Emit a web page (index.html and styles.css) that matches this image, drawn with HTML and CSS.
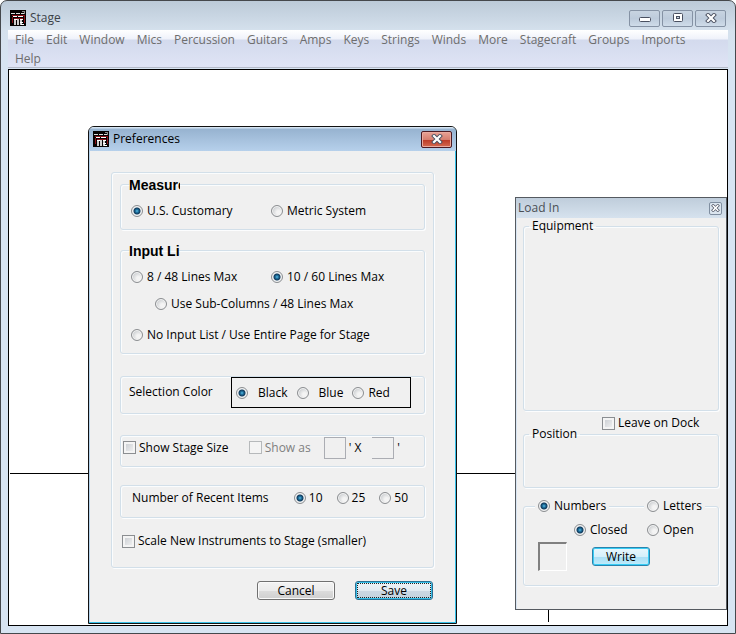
FILE: index.html
```html
<!DOCTYPE html>
<html lang="en">
<head>
<meta charset="utf-8">
<title>Stage</title>
<link rel="stylesheet" href="styles.css">
</head>
<body>
<svg class="defs" aria-hidden="true">
  <symbol id="app" viewBox="0 0 16 16">
    <rect width="16" height="16" fill="#060303"/>
    <path d="M2 5.500h12M2.500 7v6M14.500 5v8M4 8.500h9" stroke="#8c1018" fill="none"/>
    <path d="M1 3.500h4M6 3.500h4M11 3.500h3" stroke="#ddd" fill="none"/>
    <path d="M3 6.500h4M8 6.500h5" stroke="#fff" fill="none"/>
    <path d="M4 9.500h3M10 9.500h3" stroke="#fff" fill="none"/>
    <path d="M5 9v6M8 9v6M11 9v6" stroke="#fff" stroke-width="1.600" fill="none"/>
    <path d="M10 12.500h3M11 14.500h3" stroke="#fff" fill="none"/>
    <path d="M12 1.500h3M14.500 1v3" stroke="#8a8a8a" fill="none"/>
  </symbol>
  <symbol id="cross" viewBox="0 0 12 10">
    <path d="M3 2l6 6M9 2l-6 6" stroke="#4a5060" stroke-width="4" stroke-linecap="square"/>
    <path d="M3 2l6 6M9 2l-6 6" stroke="#fff" stroke-width="2.200" stroke-linecap="square"/>
  </symbol>
</svg>
<div class="window">
  <header class="titlebar">
    <svg class="app-icon" aria-hidden="true"><use href="#app"/></svg>
    <span class="title">Stage</span>
    <div class="controls">
      <button class="control" aria-label="Minimize"><svg class="low" width="12" height="6" viewBox="0 0 12 6"><rect x=".5" y=".5" width="11" height="4" rx="1" fill="#fff" stroke="#4a5060"/></svg></button>
      <button class="control" aria-label="Maximize"><svg width="12" height="10" viewBox="0 0 12 10"><rect x="1.500" y=".5" width="9" height="8" rx="1" fill="#fff" stroke="#4a5060"/><rect x="4.500" y="3.500" width="3" height="2" fill="#c8d4e2" stroke="#4a5060"/></svg></button>
      <button class="control" aria-label="Close"><svg width="12" height="10"><use href="#cross"/></svg></button>
    </div>
  </header>
  <nav class="menu">
    <a href="#">File</a><a href="#">Edit</a><a href="#">Window</a><a href="#">Mics</a><a href="#">Percussion</a><a href="#">Guitars</a><a href="#">Amps</a><a href="#">Keys</a><a href="#">Strings</a><a href="#">Winds</a><a href="#">More</a><a href="#">Stagecraft</a><a href="#">Groups</a><a href="#">Imports</a><a href="#">Help</a>
  </nav>
  <main class="canvas">
    <div class="stage-row"></div>
    <div class="stage-column"></div>

    <form class="dialog">
      <header class="dialog-title">
        <svg class="app-icon" aria-hidden="true"><use href="#app"/></svg>
        <span>Preferences</span>
        <button type="button" class="close-red" aria-label="Close"><svg width="12" height="10"><use href="#cross"/></svg></button>
      </header>
      <div class="dialog-body">
        <div class="group outer">
          <fieldset class="group titled">
            <legend>Measure</legend>
            <div class="pair">
              <label class="option"><input type="radio" name="units" checked>U.S. Customary</label>
              <label class="option"><input type="radio" name="units">Metric System</label>
            </div>
          </fieldset>
          <fieldset class="group titled lists">
            <legend>Input List</legend>
            <div class="pair">
              <label class="option"><input type="radio" name="lines">8 / 48 Lines Max</label>
              <label class="option"><input type="radio" name="lines" checked>10 / 60 Lines Max</label>
            </div>
            <label class="option sub"><input type="radio" name="sub">Use Sub-Columns / 48 Lines Max</label>
            <label class="option none"><input type="radio" name="lines">No Input List / Use Entire Page for Stage</label>
          </fieldset>
          <div class="group selection">
            <span>Selection Color</span>
            <div class="colors">
              <label class="option wide"><input type="radio" name="color" checked>Black</label>
              <label class="option wide"><input type="radio" name="color">Blue</label>
              <label class="option"><input type="radio" name="color">Red</label>
            </div>
          </div>
          <div class="group size">
            <label class="option check"><input type="checkbox">Show Stage Size</label>
            <label class="option check muted"><input type="checkbox" disabled>Show as</label>
            <div class="dimensions">
              <input type="text" class="dimension" aria-label="Stage width" disabled><span>' X</span>
              <input type="text" class="dimension open" aria-label="Stage depth" disabled><span>'</span>
            </div>
          </div>
          <div class="group recent">
            <span>Number of Recent Items</span>
            <label class="option"><input type="radio" name="recent" checked>10</label>
            <label class="option"><input type="radio" name="recent">25</label>
            <label class="option"><input type="radio" name="recent">50</label>
          </div>
          <label class="option check scale"><input type="checkbox">Scale New Instruments to Stage (smaller)</label>
        </div>
        <div class="actions">
          <button type="button" class="button">Cancel</button>
          <button type="button" class="button default"><span>Save</span></button>
        </div>
      </div>
    </form>

    <form class="panel">
      <header class="panel-title">
        <span>Load In</span>
        <button type="button" class="close-small" aria-label="Close"><svg width="9" height="8"><use href="#cross"/></svg></button>
      </header>
      <div class="panel-body">
        <fieldset class="group area equipment"><legend>Equipment</legend></fieldset>
        <label class="option check dock"><input type="checkbox">Leave on Dock</label>
        <fieldset class="group area position"><legend>Position</legend></fieldset>
        <div class="group writer">
          <div class="writer-row first">
            <label class="option on-line"><input type="radio" name="kind" checked>Numbers</label>
            <label class="option on-line"><input type="radio" name="kind">Letters</label>
          </div>
          <div class="writer-row second">
            <label class="option"><input type="radio" name="shape" checked>Closed</label>
            <label class="option"><input type="radio" name="shape">Open</label>
          </div>
          <div class="write">
            <input type="text" class="mark" aria-label="Mark">
            <button type="button" class="button glow">Write</button>
          </div>
        </div>
      </div>
    </form>
  </main>
</div>
</body>
</html>
```
FILE: styles.css
```css
* { box-sizing: border-box; }

body {
  margin: 0;
  background: #fff;
  color: #000;
  font: 12px/16px "Open Sans", "Noto Sans", sans-serif;
}

button, input { margin: 0; padding: 0; font: inherit; color: inherit; }
.defs { position: absolute; width: 0; height: 0; }
.app-icon { width: 16px; height: 16px; flex: none; }

/* Main window */
.window {
  display: flex;
  flex-direction: column;
  min-height: 100vh;
  padding: 0 7px 7px;
  border: 1px solid #45484c;
  border-radius: 7px 7px 0 0;
  background: linear-gradient(#bccad8, #d5e1ed 30px, #d7e4f2 60px);
}

.titlebar {
  display: flex;
  align-items: center;
  height: 29px;
  padding: 5px 2px 0;
  color: #3c4248;
}
.title { margin-left: 4px; }
.controls { display: flex; gap: 2px; margin-left: auto; }
.control {
  display: grid;
  place-items: center;
  width: 31px;
  height: 17px;
  border: 1px solid #8592a4;
  border-radius: 2px;
  background: linear-gradient(#c8d4e1, #bdcbdb 50%, #cfdce9);
}
.low { margin-top: 4px; }

.menu {
  display: flex;
  flex-wrap: wrap;
  align-content: flex-start;
  column-gap: 12px;
  height: 38px;
  padding: 0 7px;
  border-bottom: 1px solid #b4bac8;
  background: linear-gradient(#fff, #eff2fa 9px, #d3daed 10px, #dfe4f5);
}
.menu a {
  color: #6d6d6d;
  line-height: 19px;
  text-decoration: none;
}

.canvas {
  position: relative;
  flex: 1;
  min-height: 557px;
  margin-top: 1px;
  border: 1px solid #000;
  background: #fff;
}
.stage-row {
  position: absolute;
  top: 403px;
  left: 1px;
  right: 200px;
  height: 1px;
  background: #000;
}
.stage-column {
  position: absolute;
  right: 178px;
  top: 403px;
  bottom: 3px;
  width: 1px;
  background: #000;
}

/* Shared form parts */
.group {
  margin: 0;
  border: 1px solid #d2dfe9;
  border-radius: 3px;
  box-shadow: inset 1px 1px #fafcfd, 1px 1px #fcfdfe;
}
.option {
  display: flex;
  align-items: center;
  gap: 4px;
  height: 16px;
  white-space: nowrap;
}
input[type="radio"] {
  appearance: none;
  flex: none;
  width: 12px;
  height: 12px;
  border: 1px solid #8b8e91;
  border-radius: 50%;
  background: radial-gradient(circle at 65% 65%, #f4f4f4 20%, #c9cccf 75%);
  box-shadow: inset 0 0 0 1px #f5f5f5;
}
input[type="radio"]:checked {
  background: radial-gradient(circle at 50% 50%, #7dd0ee 0, #2584b4 1px, #103a5c 3px, #e3e7ea 4px);
}
input[type="checkbox"] {
  appearance: none;
  flex: none;
  width: 13px;
  height: 13px;
  border: 1px solid #8b8e91;
  background: linear-gradient(135deg, #c5c9ce, #f6f6f6);
  box-shadow: inset 0 0 0 2px #f4f4f4;
}
input[type="checkbox"]:disabled { border-color: #b6b9bb; background: #f4f4f4; }
.check { gap: 3px; }
.muted { color: #7f7f7f; }

.button {
  height: 19px;
  border: 1px solid #707070;
  border-radius: 3px;
  background: linear-gradient(#f3f3f3, #ebebeb 50%, #dcdcdc 51%, #cfcfcf);
  box-shadow: inset 0 0 0 1px #fafafa;
  line-height: 16px;
}

/* Preferences dialog */
.dialog {
  position: absolute;
  top: 56px;
  left: 79px;
  width: 369px;
  border: 1px solid #111;
  border-radius: 6px 6px 0 0;
  background: #f0f0f0;
  box-shadow: inset -1px -1px #35c0e8, inset 1px 0 #b5d3ec;
}
.dialog-title {
  display: flex;
  align-items: center;
  gap: 4px;
  height: 24px;
  padding: 0 4px;
  border-radius: 5px 5px 0 0;
  background: linear-gradient(#d5e4f2 1px, #97b3d0 2px, #b6d0eb);
}
.close-red {
  display: grid;
  place-items: center;
  width: 31px;
  height: 17px;
  margin-left: auto;
  border: 1px solid #4c1a22;
  border-radius: 2px;
  background: linear-gradient(#e8a296, #d67f70 50%, #bb3825 51%, #d46a50);
  box-shadow: inset 0 0 0 1px #e9aa9f;
}
.dialog-body { padding: 21px 22px 23px; }
.outer { padding: 2px 8px 18px; }

.titled { padding: 10px; }
.titled legend {
  width: 51px;
  height: 18px;
  margin-left: -2px;
  padding: 0;
  overflow: hidden;
  font: bold 14px/20px "Liberation Sans", sans-serif;
  white-space: nowrap;
}
.pair { display: grid; grid-template-columns: 140px 1fr; }
.lists { margin-top: 11px; }
.sub { margin: 11px 0 15px 24px; }

.selection {
  display: flex;
  align-items: flex-start;
  justify-content: space-between;
  height: 38px;
  margin-top: 22px;
  padding: 0 13px 0 8px;
  line-height: 30px;
}
.colors {
  display: flex;
  align-items: center;
  gap: 9px;
  width: 180px;
  height: 31px;
  padding-left: 4px;
  border: 1px solid #000;
}
.wide { gap: 10px; }

.size {
  display: flex;
  align-items: center;
  height: 32px;
  margin-top: 21px;
  padding: 0 2px 7px;
}
.size .muted { margin-left: auto; }
.dimensions { display: flex; align-items: center; gap: 3px; margin: 0 22px 0 13px; }
.dimension {
  width: 22px;
  height: 22px;
  border: 1px solid #abadb3;
  background: #f0f0f0;
}
.dimension.open { margin-left: 8px; border-left: 0; }

.recent {
  display: flex;
  align-items: center;
  height: 33px;
  margin-top: 18px;
  padding: 0 16px 7px 11px;
}
.recent span { margin-right: auto; }
.recent .option { gap: 3px; margin-left: 14px; }
.scale { margin: 15px 0 0 2px; }
.actions { display: flex; justify-content: flex-end; gap: 20px; margin: 13px 1px 0 0; }
.actions .button { width: 78px; }
.default {
  padding: 1px;
  border-color: #2c6f92;
  background: linear-gradient(#eef3f7, #e2eaf1 50%, #ccd8e3 51%, #c4d2de);
  box-shadow: inset 0 0 0 1px #36c0ea;
}
.default span { display: block; border: 1px dotted #222; line-height: 13px; }

/* Load In palette */
.panel {
  position: absolute;
  top: 127px;
  right: 0;
  width: 212px;
  border: 1px solid #555a60;
  background: #f0f0f0;
  box-shadow: inset 1px 0 #d7e4f2;
}
.panel-title {
  display: flex;
  align-items: center;
  justify-content: space-between;
  height: 20px;
  padding: 0 4px 0 2px;
  background: linear-gradient(#bfcddb, #d6e2ee);
  color: #4a4f55;
}
.close-small {
  display: grid;
  place-items: center;
  width: 13px;
  height: 13px;
  border: 1px solid #7f8ea0;
  border-radius: 2px;
  background: #dbe5ef;
}
.panel-body { padding: 4px 7px 23px; }
.area { padding: 0 5px; }
.area legend { height: 8px; padding: 0 3px; line-height: 8px; }
.equipment { height: 189px; }
.dock { height: 14px; margin: 5px 0 0 79px; }
.position { height: 58px; }
.writer { height: 80px; margin-top: 18px; }
.writer-row { display: grid; grid-template-columns: 1fr 71px; }
.first { margin-top: -9px; padding-left: 14px; }
.second { margin-top: 8px; padding-left: 50px; }
.on-line { justify-self: start; padding: 0 3px; margin-left: -3px; background: #f0f0f0; }
.write { display: flex; align-items: flex-start; gap: 25px; margin: 4px 0 0 14px; }
.mark {
  width: 29px;
  height: 29px;
  border: 1px solid #fff;
  border-top: 2px solid #808080;
  border-left: 2px solid #808080;
  background: #f0f0f0;
}
.glow {
  width: 58px;
  margin-top: 5px;
  border-color: #2a83ad;
  background: linear-gradient(#e9f7fd, #d5f0fb 50%, #a9def5 51%, #c0ecfb);
  box-shadow: inset 0 0 0 1px #38cdf5;
}
```
